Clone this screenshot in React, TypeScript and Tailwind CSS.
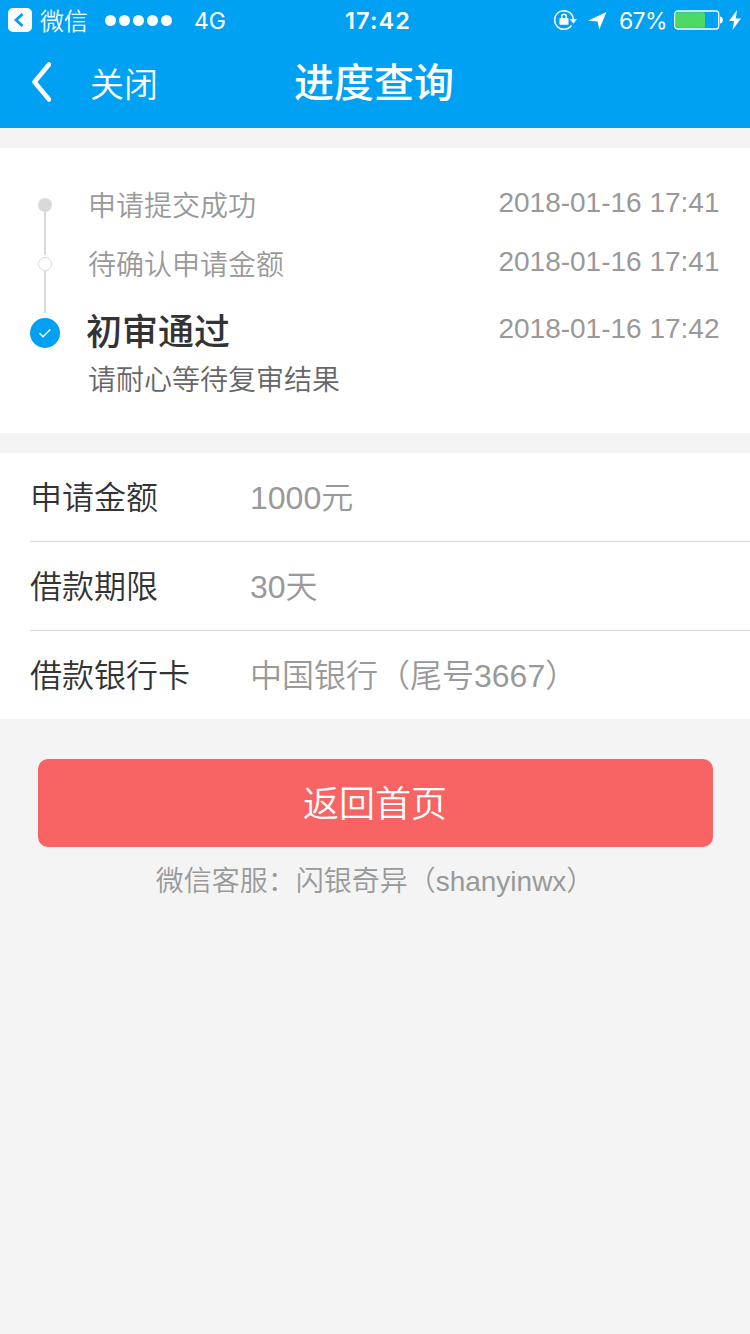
import React from 'react';

interface Step {
    title: string;
    time: string;
    note?: string;
}

interface Detail {
    label: string;
    value: string;
}

const steps: Step[] = [
    { title: '申请提交成功', time: '2018-01-16 17:41' },
    { title: '待确认申请金额', time: '2018-01-16 17:41' },
    { title: '初审通过', time: '2018-01-16 17:42', note: '请耐心等待复审结果' },
];

const details: Detail[] = [
    { label: '申请金额', value: '1000元' },
    { label: '借款期限', value: '30天' },
    { label: '借款银行卡', value: '中国银行（尾号3667）' },
];

const StatusBar: React.FC = () => (
    <div className="grid h-10 grid-cols-[1fr_auto_1fr] items-center pl-2 pr-[9px] font-['Inter','Noto_Sans_CJK_SC',sans-serif] text-[23px] leading-8">
        <div className="flex items-center">
            <svg className="h-6 w-6" viewBox="0 0 24 24" fill="none">
                <rect width="24" height="24" rx="5" fill="#fff" />
                <path d="M14.5 6 8 12l6.500 6" stroke="#00a0f3" strokeWidth="2.800" />
            </svg>
            <span className="ml-2 mt-[-1px] font-['Noto_Sans_CJK_SC',sans-serif] text-[24px] font-[350]">微信</span>
            <div className="ml-[17px] flex gap-[3px]">
                {[0, 1, 2, 3, 4].map(i => (
                    <span key={i} className="h-[11px] w-[11px] rounded-full bg-white" />
                ))}
            </div>
            <span className="ml-[22px] mt-[2px]">4G</span>
        </div>
        <span className="ml-[7px] mt-[2px] text-[23.5px] font-semibold tracking-[1.1px]">17:42</span>
        <div className="flex items-center justify-end">
            <svg className="h-[22px] w-6" viewBox="0 0 24 22" fill="none">
                <path d="M18.500 16.500A9.300 9.300 0 1 1 20.300 11" stroke="#fff" strokeWidth="1.500" />
                <path d="M16.500 10h7.500l-3.700 4.500z" fill="#fff" />
                <rect x="6.500" y="9" width="9" height="6.800" rx=".7" fill="#fff" />
                <path d="M8.700 10V7.500a2.300 2.300 0 0 1 4.600 0V10" stroke="#fff" strokeWidth="1.400" />
            </svg>
            <svg className="ml-[11px] mt-[2px] h-[18px] w-[19px]" viewBox="0 0 19 18" fill="#fff">
                <path d="M18.500 0 11.300 17.500 9.500 9.500 0 8.800z" />
            </svg>
            <span className="ml-3 mt-[2px] tracking-[-0.6px]">67%</span>
            <svg className="ml-[7px] h-5 w-[49px]" viewBox="0 0 49 20" fill="none">
                <rect x=".75" y="1" width="44" height="18" rx="3" stroke="#fff" strokeWidth="1.300" />
                <rect x="2" y="2.300" width="29" height="15.400" rx="1.500" fill="#4cd964" />
                <path d="M46 6.500c1.700 0 2.800 1.200 2.800 3.500s-1.100 3.500-2.800 3.500z" fill="#fff" />
            </svg>
            <svg className="ml-[6px] h-5 w-3" viewBox="0 0 12 20" fill="#fff">
                <path d="M8 0 0 11h5L3.500 20 12 8.500H6.800z" />
            </svg>
        </div>
    </div>
);

const NavBar: React.FC = () => (
    <div className="grid h-[88px] grid-cols-[1fr_auto_1fr] items-center pl-[31px] pr-[33px]">
        <button type="button" className="flex items-center">
            <svg className="mt-[-4px] h-10 w-5" viewBox="0 0 20 40" fill="none">
                <path d="M18 2.500 3.500 20 18 37.500" stroke="#fff" strokeWidth="4.500" strokeLinecap="round" strokeLinejoin="round" />
            </svg>
            <span className="ml-[39px] mt-[2px] text-[34px] font-[350]">关闭</span>
        </button>
        <h1 className="mt-[-2px] text-[40px] font-medium">进度查询</h1>
    </div>
);

const Timeline: React.FC = () => (
    <section className="flex h-[285px] bg-white pl-[30px] pr-[30.5px]">
        <div className="flex w-[30px] flex-col items-center pt-[50px]">
            <span className="h-[14px] w-[14px] rounded-full bg-[#d9d9d9]" />
            <span className="h-[43px] w-[2px] bg-[#d9d9d9]" />
            <span className="mt-[2px] h-[14px] w-[14px] rounded-full border border-[#d9d9d9]" />
            <span className="h-[42px] w-[2px] bg-[#d9d9d9]" />
            <svg className="mt-[5px] h-[30px] w-[30px]" viewBox="0 0 30 30" fill="none">
                <circle cx="15" cy="15" r="15" fill="#00a0f3" />
                <path d="m9.500 15.200 3.600 3.600 7.200-7.300" stroke="#fff" strokeWidth="1.500" />
            </svg>
        </div>
        <ul className="flex-1 pl-[28px] pt-[29px]">
            {steps.map(step => (
                <li key={step.time + step.title} className={step.note ? 'pt-[5px]' : 'h-[59px]'}>
                    <div className="flex items-center justify-between">
                        <span className={step.note ? 'text-[36px] font-medium leading-[66px] text-[#333] ml-[-2px]' : 'text-[28px] font-[350] leading-[60px] text-[#999]'}>{step.title}</span>
                        <span className="mt-[-8px] text-[28px] text-[#999]">{step.time}</span>
                    </div>
                    {step.note && <p className="mt-[-5px] text-[28px] font-[350] leading-10 text-[#666]">{step.note}</p>}
                </li>
            ))}
        </ul>
    </section>
);

const Details: React.FC = () => (
    <section className="mt-5 bg-white pl-[30px] text-[32px]">
        {details.map(item => (
            <div key={item.label} className="flex h-[89px] items-center border-b border-[#d9d9d9] last:h-[88px] last:border-b-0">
                <span className="mt-px w-[220px] font-[350] text-[#333]">{item.label}</span>
                <span className="mt-px font-[350] text-[#999]">{item.value}</span>
            </div>
        ))}
    </section>
);

const App: React.FC = () => (
    <div className="min-h-screen w-full bg-[#f4f4f4] font-['Liberation_Sans','Noto_Sans_CJK_SC',sans-serif]">
        <header className="h-32 bg-[#00a0f3] text-white">
            <StatusBar />
            <NavBar />
        </header>
        <main className="pt-5">
            <Timeline />
            <Details />
            <div className="mt-10 px-[37.5px]">
                <button type="button" className="h-[88px] w-full rounded-[10px] bg-[#f76463] pt-[3px] text-[36px] font-[350] text-white">返回首页</button>
            </div>
            <p className="mt-[15px] text-center text-[28px] font-[350] leading-10 text-[#999]">微信客服：闪银奇异（shanyinwx）</p>
        </main>
    </div>
);

export default App;
